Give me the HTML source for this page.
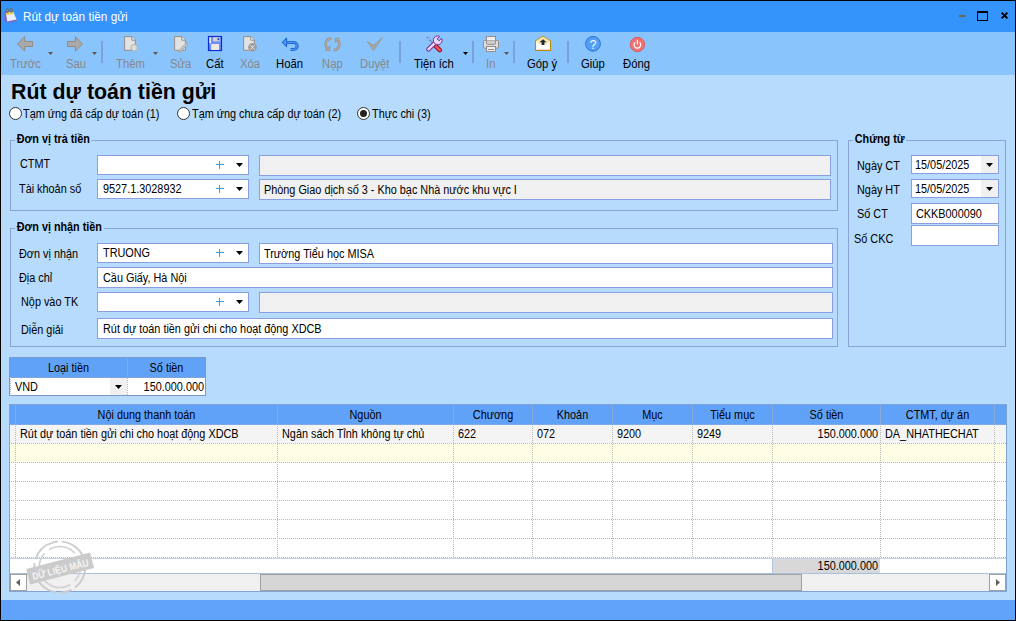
<!DOCTYPE html>
<html><head><meta charset="utf-8">
<style>
*{box-sizing:border-box;margin:0;padding:0}
html,body{width:1016px;height:621px;overflow:hidden;background:#000}
body{position:relative;font-family:"Liberation Sans",sans-serif;font-size:11px;color:#000}
.a{position:absolute}
.t{position:absolute;white-space:nowrap;font-size:12px;line-height:13px;transform:scaleX(0.905);transform-origin:0 0}
#title{left:1px;top:1px;width:1014px;height:31px;background:#3594fc}
#tb{left:1px;top:32px;width:1014px;height:43px;background:#8ac4fd}
#bd{left:1px;top:75px;width:1014px;height:525px;background:#b7dbfd}
#sb{left:1px;top:600px;width:1014px;height:20px;background:#61a3fb}
.lbl{position:absolute;white-space:nowrap;font-size:12px;line-height:13px;top:58px;transform:scaleX(0.94);transform-origin:0 0}
.g{color:#888}
.sep{position:absolute;top:41px;width:2px;height:22px;background:#7aa2d8}
.dd{position:absolute;top:52px;width:5px;height:3px;background:#5f5650;clip-path:polygon(0 0,100% 0,50% 100%)}
.grp{position:absolute;border:1px solid #8aa4d4}
.gt{position:absolute;white-space:nowrap;font-weight:bold;font-size:12px;line-height:13px;background:#b7dbfd;padding:0 2px;transform:scaleX(0.9);transform-origin:0 0}
.in{position:absolute;border:1px solid #8b9ee2;background:#fff;height:20px}
.dis{background:#f0f0f0}
.plus{position:absolute;width:8px;height:8px;font-size:0}
.plus::before{content:"";position:absolute;left:0;top:3px;width:8px;height:1px;background:#3d9be9}
.plus::after{content:"";position:absolute;left:3px;top:0;width:1px;height:8px;background:#3d9be9}
.arr{position:absolute;width:7px;height:4px;background:#000;clip-path:polygon(0 0,100% 0,50% 100%)}
.hd{position:absolute;top:0;height:100%;width:1px;background:#88acd8}
.vd{position:absolute;width:1px;background:repeating-linear-gradient(to bottom,#b9b9b9 0 1px,transparent 1px 2px)}
.hdot{position:absolute;height:1px;background:repeating-linear-gradient(to right,#b9b9b9 0 1px,transparent 1px 2px)}
.ht{position:absolute;white-space:nowrap;font-size:12px;line-height:13px;text-align:center;transform:scaleX(0.905)}
</style></head><body>
<div class="a" id="title"></div>
<div class="a" id="tb"></div>
<div class="a" id="bd"></div>
<div class="a" id="sb"></div>

<!-- title -->
<div class="t" style="left:23px;top:10px;font-size:12px;color:#fff;line-height:14px;transform:scaleX(0.98)">Rút dự toán tiền gửi</div>

<!-- toolbar labels -->
<div class="lbl g" style="left:10px">Trước</div>
<div class="lbl g" style="left:66px">Sau</div>
<div class="lbl g" style="left:116px">Thêm</div>
<div class="lbl g" style="left:170px">Sửa</div>
<div class="lbl" style="left:206px">Cất</div>
<div class="lbl g" style="left:240px">Xóa</div>
<div class="lbl" style="left:276px">Hoãn</div>
<div class="lbl g" style="left:322px">Nạp</div>
<div class="lbl g" style="left:360px">Duyệt</div>
<div class="lbl" style="left:414px">Tiện ích</div>
<div class="lbl g" style="left:486px">In</div>
<div class="lbl" style="left:527px">Góp ý</div>
<div class="lbl" style="left:581px">Giúp</div>
<div class="lbl" style="left:623px">Đóng</div>
<div class="sep" style="left:101px"></div>
<div class="sep" style="left:399px"></div>
<div class="sep" style="left:472px"></div>
<div class="sep" style="left:513px"></div>
<div class="sep" style="left:567px"></div>
<div class="dd" style="left:48px"></div>
<div class="dd" style="left:92px"></div>
<div class="dd" style="left:153px"></div>
<div class="dd" style="left:463px;background:#000"></div>
<div class="dd" style="left:504px"></div>

<!-- toolbar icons -->
<svg class="a" style="left:0;top:0" width="1016" height="75" viewBox="0 0 1016 75">
<!-- back -->
<path d="M17.6 43.9 L24.6 36.6 V41.4 H32.6 V46.5 H24.6 V51.2 Z" fill="#a9a9a9" stroke="#948a84" stroke-width="1" stroke-linejoin="miter"/>
<!-- fwd -->
<path d="M82.4 43.9 L75.4 36.6 V41.4 H67.4 V46.5 H75.4 V51.2 Z" fill="#a9a9a9" stroke="#948a84" stroke-width="1"/>
<!-- new doc -->
<path d="M124.6 36.6 H132 L135.4 40 V50.3 H124.6 Z" fill="#e2e2e2" stroke="#968d88" stroke-width="1"/>
<path d="M131.8 36.8 V40.2 H135.2" fill="#f4f4f4" stroke="#968d88" stroke-width="1"/>
<circle cx="134.2" cy="47.8" r="3.3" fill="#dcdcdc" stroke="#b5b0ac" stroke-width="1"/>
<!-- edit doc -->
<path d="M174.6 36.6 H182 L185.4 40 V50.3 H174.6 Z" fill="#e2e2e2" stroke="#968d88" stroke-width="1"/>
<path d="M181.8 36.8 V40.2 H185.2" fill="#f4f4f4" stroke="#968d88" stroke-width="1"/>
<path d="M179.5 51.5 L186.8 43.6" stroke="#a8a8a8" stroke-width="2.6" stroke-linecap="round"/>
<path d="M180 50.8 L186.5 44" stroke="#dedede" stroke-width="1"/>
<!-- save -->
<rect x="208.5" y="36.5" width="13" height="14" fill="#6d8ef2" stroke="#0b2bd6" stroke-width="1.2"/>
<rect x="209.4" y="37.3" width="1.6" height="6" fill="#e8eefc"/>
<rect x="213" y="37.3" width="7" height="4" fill="#d8d4cc"/>
<rect x="217.5" y="38.2" width="1.8" height="2" fill="#1d3fe6"/>
<rect x="211.2" y="44" width="7.8" height="6" fill="#ebe9e2"/>
<!-- delete doc -->
<path d="M243.6 36.6 H251 L254.4 40 V50.3 H243.6 Z" fill="#e2e2e2" stroke="#968d88" stroke-width="1"/>
<path d="M250.8 36.8 V40.2 H254.2" fill="#f4f4f4" stroke="#968d88" stroke-width="1"/>
<circle cx="252.5" cy="47.3" r="4.3" fill="#9c9c9c"/>
<path d="M250.3 45.1 L254.7 49.5 M254.7 45.1 L250.3 49.5" stroke="#f2f2f2" stroke-width="0.9"/>
<!-- undo -->
<path d="M286 42.4 H293.6 A3.6 3.6 0 0 1 293.6 49.6 H290.6" fill="none" stroke="#1c6ad6" stroke-width="3"/>
<path d="M286 42.4 H293.6 A3.6 3.6 0 0 1 293.6 49.6 H290.6" fill="none" stroke="#5b9cf0" stroke-width="1"/>
<path d="M282.4 42.4 L286.6 38.2 V46.6 Z" fill="#5b9cf0" stroke="#1c6ad6" stroke-width="1.1" stroke-linejoin="round"/>
<!-- refresh -->
<path d="M331.5 38.6 A5.6 5.6 0 0 0 327.6 48.4" fill="none" stroke="#9a928d" stroke-width="2.6"/>
<path d="M331.5 38.6 A5.6 5.6 0 0 0 327.6 48.4" fill="none" stroke="#b4b4b4" stroke-width="1"/>
<path d="M325.2 50.6 H329.8 V46 Z" fill="#a8a8a8" stroke="#9a928d" stroke-width="0.8"/>
<path d="M333.5 50 A5.6 5.6 0 0 0 337.4 40.2" fill="none" stroke="#9a928d" stroke-width="2.6"/>
<path d="M333.5 50 A5.6 5.6 0 0 0 337.4 40.2" fill="none" stroke="#b4b4b4" stroke-width="1"/>
<path d="M339.4 38.3 H335.2 V42.6 Z" fill="#a8a8a8" stroke="#9a928d" stroke-width="0.8"/>
<!-- check -->
<path d="M367.2 41.4 L373.5 45.4 L382.6 37.4 L373.5 50.6 Z" fill="#a7a7a7" stroke="#9a928d" stroke-width="0.7" stroke-linejoin="round"/>
<!-- tools -->
<path d="M427.2 37.4 L434.6 44.8" stroke="#5566b0" stroke-width="1"/>
<ellipse cx="428.6" cy="38.8" rx="0.9" ry="2" transform="rotate(-45 428.6 38.8)" fill="#e4ecfc" stroke="#5a6cc0" stroke-width="0.7"/>
<path d="M436 46.3 L439.8 50.1" stroke="#a0101c" stroke-width="4.6" stroke-linecap="round"/>
<path d="M436 46.3 L439.8 50.1" stroke="#e65560" stroke-width="2.6" stroke-linecap="round"/>
<path d="M428.4 49.4 L435.2 42.6" stroke="#7a2a9a" stroke-width="4.4" stroke-linecap="round"/>
<path d="M428.4 49.4 L435.2 42.6" stroke="#e6d8f6" stroke-width="2.4" stroke-linecap="round"/>
<path d="M439.08 40.83 L441.62 38.29 A4.4 4.4 0 1 1 439.71 36.38 L437.17 38.92 Z" fill="#e6d8f6" stroke="#7a2a9a" stroke-width="1"/>
<!-- printer -->
<rect x="486.5" y="36.5" width="9" height="4" fill="#f0f0f0" stroke="#968d88" stroke-width="1"/>
<rect x="483.5" y="40.5" width="15" height="7.6" rx="0.8" fill="#dedede" stroke="#968d88" stroke-width="1"/>
<path d="M486.5 40.6 V43.2 Q486.5 44.4 487.7 44.4 H494.3 Q495.5 44.4 495.5 43.2 V40.6" fill="#cfcfcf" stroke="#8f8f8f" stroke-width="1"/>
<rect x="486.5" y="46.5" width="9" height="5" fill="#eeeeee" stroke="#968d88" stroke-width="1"/>
<path d="M488 49.5 H494" stroke="#8f8f8f" stroke-width="1"/>
<!-- feedback envelope -->
<path d="M535.5 41 L543 36.4 L550.5 41 V50.4 H535.5 Z" fill="#ffffff" stroke="#c08a12" stroke-width="1.1"/>
<path d="M536 41 L543 36.8 L550 41 L545.5 45 H540.5 Z" fill="#fbe8a4"/>
<path d="M543 39.2 L546.6 42.2 H544.4 V45 H541.6 V42.2 H539.4 Z" fill="#1c2840"/>
<!-- help -->
<circle cx="593" cy="43.8" r="7.4" fill="#559ef6" stroke="#2a74d6" stroke-width="1"/>
<text x="593" y="48.6" text-anchor="middle" font-family="Liberation Sans" font-size="12" fill="#fff">?</text>
<!-- close -->
<circle cx="637.4" cy="44.5" r="7.2" fill="#f07272" stroke="#dc4a4a" stroke-width="0.8"/>
<path d="M635.2 42.4 A3.3 3.3 0 1 0 639.6 42.4" fill="none" stroke="#fff" stroke-width="1.2"/>
<path d="M637.4 40 V44.2" stroke="#fff" stroke-width="1.2"/>
<!-- window app icon -->
<path d="M4.4 12.2 L6.6 11.6 L16.8 19.2 L16.2 21.4 L6.8 22.8 L4.3 20.6 Z" fill="#7c64c8"/>
<path d="M5.9 13 L13.2 11.8 L16.6 19.4 L7.2 21.4 Z" fill="#e6f0fb"/>
<path d="M5.9 13 L13.2 11.8 L14 14 L6.3 15.2 Z" fill="#f4cc58"/>
<ellipse cx="7.4" cy="10.6" rx="1.3" ry="2" fill="none" stroke="#6a6a6a" stroke-width="1"/>
<ellipse cx="11.2" cy="10.3" rx="1.3" ry="2" fill="none" stroke="#6a6a6a" stroke-width="1"/>
<!-- window controls -->
<rect x="959" y="15" width="7" height="2" fill="#6f655c"/>
<path d="M977 11 H988 V21 H977 Z M978 13 V20 H987 V13 Z" fill="#000" fill-rule="evenodd"/>
<path d="M1001.6 12.6 L1007.4 18.4 M1007.4 12.6 L1001.6 18.4" stroke="#000" stroke-width="1.9"/>
</svg>

<!-- heading -->
<div class="t" style="left:11px;top:80px;font-size:22px;line-height:24px;font-weight:bold;transform:scaleX(0.97)">Rút dự toán tiền gửi</div>

<!-- body content -->
<!-- radios -->
<div class="a" style="left:9px;top:107px;width:13px;height:13px;border-radius:50%;border:1px solid #333;background:#fff"></div>
<div class="t" style="left:23px;top:108px">Tạm ứng đã cấp dự toán (1)</div>
<div class="a" style="left:177px;top:107px;width:13px;height:13px;border-radius:50%;border:1px solid #333;background:#fff"></div>
<div class="t" style="left:192px;top:108px">Tạm ứng chưa cấp dự toán (2)</div>
<div class="a" style="left:357px;top:107px;width:13px;height:13px;border-radius:50%;border:1px solid #333;background:#fff"></div>
<div class="a" style="left:360px;top:110px;width:7px;height:7px;border-radius:50%;background:#222"></div>
<div class="t" style="left:372px;top:108px">Thực chi (3)</div>

<!-- group 1 -->
<div class="grp" style="left:10px;top:140px;width:828px;height:71px"></div>
<div class="gt" style="left:15px;top:133px">Đơn vị trả tiền</div>
<div class="t" style="left:20px;top:158px">CTMT</div>
<div class="t" style="left:19px;top:183px">Tài khoản số</div>
<div class="in" style="left:97px;top:155px;width:152px"></div>
<div class="plus" style="left:216px;top:161px"></div>
<div class="arr" style="left:236px;top:163px"></div>
<div class="in dis" style="left:259px;top:155px;width:572px;height:21px"></div>
<div class="in" style="left:97px;top:179px;width:152px"></div>
<div class="t" style="left:103px;top:183px">9527.1.3028932</div>
<div class="plus" style="left:216px;top:185px"></div>
<div class="arr" style="left:236px;top:187px"></div>
<div class="in dis" style="left:259px;top:179px;width:572px;height:21px"></div>
<div class="t" style="left:264px;top:184px">Phòng Giao dịch số 3 - Kho bạc Nhà nước khu vực I</div>

<!-- group 2 -->
<div class="grp" style="left:10px;top:228px;width:828px;height:119px"></div>
<div class="gt" style="left:15px;top:221px">Đơn vị nhận tiền</div>
<div class="t" style="left:19px;top:248px">Đơn vị nhận</div>
<div class="t" style="left:19px;top:272px">Địa chỉ</div>
<div class="t" style="left:21px;top:296px">Nộp vào TK</div>
<div class="t" style="left:21px;top:324px">Diễn giải</div>
<div class="in" style="left:97px;top:243px;width:152px"></div>
<div class="t" style="left:103px;top:247px">TRUONG</div>
<div class="plus" style="left:216px;top:249px"></div>
<div class="arr" style="left:236px;top:251px"></div>
<div class="in" style="left:259px;top:243px;width:574px;height:21px"></div>
<div class="t" style="left:264px;top:248px">Trường Tiểu học MISA</div>
<div class="in" style="left:97px;top:267px;width:736px;height:21px"></div>
<div class="t" style="left:103px;top:272px">Cầu Giấy, Hà Nội</div>
<div class="in" style="left:97px;top:292px;width:152px"></div>
<div class="plus" style="left:216px;top:298px"></div>
<div class="arr" style="left:236px;top:300px"></div>
<div class="in dis" style="left:259px;top:292px;width:574px;height:21px"></div>
<div class="in" style="left:97px;top:318px;width:736px;height:21px"></div>
<div class="t" style="left:103px;top:323px">Rút dự toán tiền gửi chi cho hoạt động XDCB</div>

<!-- group 3 -->
<div class="grp" style="left:848px;top:140px;width:158px;height:207px"></div>
<div class="gt" style="left:853px;top:133px">Chứng từ</div>
<div class="t" style="left:857px;top:160px">Ngày CT</div>
<div class="t" style="left:857px;top:184px">Ngày HT</div>
<div class="t" style="left:857px;top:208px">Số CT</div>
<div class="t" style="left:854px;top:233px">Số CKC</div>
<div class="in" style="left:911px;top:155px;width:88px;height:19px"></div>
<div class="a" style="left:981px;top:156px;width:17px;height:17px;background:#f0f0f0"></div>
<div class="arr" style="left:986px;top:163px"></div>
<div class="t" style="left:915px;top:159px">15/05/2025</div>
<div class="in" style="left:911px;top:179px;width:88px;height:19px"></div>
<div class="a" style="left:981px;top:180px;width:17px;height:17px;background:#f0f0f0"></div>
<div class="arr" style="left:986px;top:187px"></div>
<div class="t" style="left:915px;top:183px">15/05/2025</div>
<div class="in" style="left:911px;top:203px;width:88px;height:21px"></div>
<div class="t" style="left:916px;top:208px">CKKB000090</div>
<div class="in" style="left:911px;top:225px;width:88px;height:21px"></div>

<!-- currency table -->
<div class="a" style="left:9px;top:357px;width:197px;height:39px;border:1px solid #7b9acb;background:#fff"></div>
<div class="a" style="left:10px;top:358px;width:195px;height:19px;background:#61a2f9"></div>
<div class="a" style="left:10px;top:377px;width:195px;height:1px;background:#80a4d8"></div>
<div class="a" style="left:127px;top:358px;width:1px;height:19px;background:#88acd8"></div>
<div class="ht" style="left:10px;top:362px;width:117px">Loại tiền</div>
<div class="ht" style="left:128px;top:362px;width:77px">Số tiền</div>
<div class="vd" style="left:10px;top:377px;height:18px"></div>
<div class="vd" style="left:127px;top:378px;height:17px"></div>
<div class="a" style="left:110px;top:378px;width:17px;height:17px;background:#f0f0f0"></div>
<div class="arr" style="left:115px;top:385px"></div>
<div class="t" style="left:15px;top:381px">VND</div>
<div class="t" style="left:128px;top:381px;width:76px;text-align:right;transform-origin:100% 0">150.000.000</div>
<!-- grid -->
<div class="a" style="left:9px;top:404px;width:998px;height:188px;border:1px solid #7ea4d8;background:#fff"></div>
<div class="a" style="left:10px;top:405px;width:996px;height:19px;background:#61a2f9"></div>
<div class="a" style="left:15px;top:405px;width:1px;height:19px;background:#88acd8"></div>
<div class="a" style="left:277px;top:405px;width:1px;height:19px;background:#88acd8"></div>
<div class="a" style="left:453px;top:405px;width:1px;height:19px;background:#88acd8"></div>
<div class="a" style="left:532px;top:405px;width:1px;height:19px;background:#88acd8"></div>
<div class="a" style="left:612px;top:405px;width:1px;height:19px;background:#88acd8"></div>
<div class="a" style="left:692px;top:405px;width:1px;height:19px;background:#88acd8"></div>
<div class="a" style="left:772px;top:405px;width:1px;height:19px;background:#88acd8"></div>
<div class="a" style="left:880px;top:405px;width:1px;height:19px;background:#88acd8"></div>
<div class="a" style="left:994px;top:405px;width:1px;height:19px;background:#88acd8"></div>
<div class="a" style="left:10px;top:424px;width:996px;height:1px;background:#80aae4"></div>
<div class="a" style="left:10px;top:425px;width:996px;height:18px;background:#f4f4f4"></div>
<div class="a" style="left:10px;top:444px;width:996px;height:18px;background:#fefee4"></div>
<div class="hdot" style="left:11px;top:443px;width:995px"></div>
<div class="hdot" style="left:11px;top:462px;width:995px"></div>
<div class="hdot" style="left:11px;top:481px;width:995px"></div>
<div class="hdot" style="left:11px;top:500px;width:995px"></div>
<div class="hdot" style="left:11px;top:519px;width:995px"></div>
<div class="hdot" style="left:11px;top:538px;width:995px"></div>
<div class="hdot" style="left:11px;top:557px;width:995px"></div>
<div class="vd" style="left:15px;top:426px;height:131px"></div>
<div class="vd" style="left:277px;top:426px;height:131px"></div>
<div class="vd" style="left:453px;top:426px;height:131px"></div>
<div class="vd" style="left:532px;top:426px;height:131px"></div>
<div class="vd" style="left:612px;top:426px;height:131px"></div>
<div class="vd" style="left:692px;top:426px;height:131px"></div>
<div class="vd" style="left:772px;top:426px;height:131px"></div>
<div class="vd" style="left:880px;top:426px;height:131px"></div>
<div class="vd" style="left:994px;top:426px;height:131px"></div>
<div class="a" style="left:10px;top:558px;width:996px;height:1px;background:#c4d4e8"></div>
<div class="a" style="left:772px;top:559px;width:108px;height:14px;background:#d8d8d8;border-left:1px solid #b4c8e0"></div>
<div class="a" style="left:10px;top:573px;width:996px;height:1px;background:#a9c0dc"></div>
<div class="ht" style="left:16px;top:409px;width:261px">Nội dung thanh toán</div>
<div class="ht" style="left:278px;top:409px;width:175px">Nguồn</div>
<div class="ht" style="left:454px;top:409px;width:78px">Chương</div>
<div class="ht" style="left:533px;top:409px;width:79px">Khoản</div>
<div class="ht" style="left:613px;top:409px;width:79px">Mục</div>
<div class="ht" style="left:693px;top:409px;width:79px">Tiểu mục</div>
<div class="ht" style="left:773px;top:409px;width:107px">Số tiền</div>
<div class="ht" style="left:881px;top:409px;width:113px">CTMT, dự án</div>
<div class="t" style="left:20px;top:428px">Rút dự toán tiền gửi chi cho hoạt động XDCB</div>
<div class="t" style="left:282px;top:428px">Ngân sách Tỉnh không tự chủ</div>
<div class="t" style="left:458px;top:428px">622</div>
<div class="t" style="left:537px;top:428px">072</div>
<div class="t" style="left:617px;top:428px">9200</div>
<div class="t" style="left:697px;top:428px">9249</div>
<div class="t" style="left:773px;top:428px;width:105px;text-align:right;transform-origin:100% 0">150.000.000</div>
<div class="t" style="left:885px;top:428px">DA_NHATHECHAT</div>
<div class="t" style="left:773px;top:560px;width:105px;text-align:right;transform-origin:100% 0">150.000.000</div>
<div class="a" style="left:10px;top:574px;width:996px;height:17px;background:#f0f0f0"></div>
<div class="a" style="left:10px;top:574px;width:17px;height:17px;background:#fff;border:1px solid #a0a0a0"></div>
<div class="a" style="left:16px;top:579px;width:4px;height:7px;background:#606060;clip-path:polygon(100% 0,100% 100%,0 50%)"></div>
<div class="a" style="left:260px;top:574px;width:542px;height:17px;background:#d6d6d6;border:1px solid #a0a0a0"></div>
<div class="a" style="left:989px;top:574px;width:17px;height:17px;background:#fff;border:1px solid #a0a0a0"></div>
<div class="a" style="left:996px;top:579px;width:4px;height:7px;background:#606060;clip-path:polygon(0 0,100% 50%,0 100%)"></div>
<!-- stamp -->
<svg class="a" style="left:0;top:520px" width="120" height="90" viewBox="0 520 120 90">
<g transform="rotate(-14.5 60 568)" opacity="0.95">
<circle cx="60" cy="567" r="25.5" fill="none" stroke="#cbcbcb" stroke-width="2" stroke-dasharray="30 4 12 4 40 4 30 4 36"/>
<circle cx="60" cy="567" r="20.5" fill="none" stroke="#cfcfcf" stroke-width="1.6" stroke-dasharray="20 6 30 6 22 6 28"/>
<rect x="27" y="560.5" width="66" height="16" fill="#c9c9c9"/>
<text x="31" y="573" font-family="Liberation Sans" font-weight="bold" font-size="10" fill="#f4f4f4" textLength="58" lengthAdjust="spacingAndGlyphs">DỮ LIỆU MẪU</text>
</g>
</svg>
</body></html>
